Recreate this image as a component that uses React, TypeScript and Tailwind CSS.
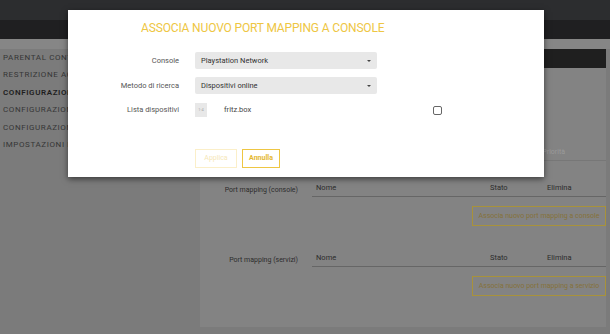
import React from "react";

function SideItem({ label, active }: { label: string; active?: boolean }) {
  return (
    <div
      className={`h-[17.5px] flex items-center pl-[3px] text-[8px] tracking-[0.6px] uppercase whitespace-nowrap ${
        active ? "text-[#1e1e1e] font-semibold" : "text-[#363636]"
      }`}
    >
      {label}
    </div>
  );
}

function Section({ label, button }: { label: string; button: string }) {
  return (
    <div className="flex flex-col">
      <div className="flex items-end h-[14px]">
        <div className="w-[98px] text-right text-[7px] text-[#2c2c2c] pb-[2px]">{label}</div>
        <div className="ml-[14px] flex-1 flex items-end border-b border-[#666] h-[14px] text-[7.5px] text-[#2c2c2c] pb-[3px]">
          <span className="pl-[4px] w-[178px]">Nome</span>
          <span className="w-[57px]">Stato</span>
          <span>Elimina</span>
        </div>
      </div>
      <div className="flex justify-end mt-[9px]">
        <div className="h-[20px] w-[134px] border border-[#a8923a] flex items-center justify-center text-[7px] text-[#85723a] whitespace-nowrap">
          {button}
        </div>
      </div>
    </div>
  );
}

export default function App() {
  return (
    <div
      className="relative w-[610px] h-[334px] overflow-hidden bg-[#7b7b7b]"
      style={{ fontFamily: 'Roboto, "Liberation Sans", sans-serif' }}
    >
      <div className="h-[20px] bg-[#2c2d2f]" />
      <div className="h-[19px] bg-[#1f1f21]" />
      <div className="h-[10px] bg-[#868686]" />
      <div className="flex">
        <div className="w-[200px] flex flex-col">
          <SideItem label="Parental control" />
          <SideItem label="Restrizione accesso" />
          <SideItem label="Configurazione NAT" active />
          <SideItem label="Configurazione DMZ" />
          <SideItem label="Configurazione UPnP" />
          <SideItem label="Impostazioni LAN" />
        </div>
        <div className="w-[406px] flex flex-col">
          <div className="h-[19px] bg-[#1f1f1f]" />
          <div className="h-[259px] bg-[#838383] flex flex-col">
            <div className="h-[93px] flex justify-end items-end">
              <div className="flex-1 ml-[112px] border-b border-[#777] h-[14px] flex items-end justify-end pb-[3px] pr-[41px] text-[7px] text-[#9a9a9a]">
                Priorità
              </div>
            </div>
            <div className="mt-[22px]">
              <Section label="Port mapping (console)" button="Associa nuovo port mapping a console" />
            </div>
            <div className="mt-[27px]">
              <Section label="Port mapping (servizi)" button="Associa nuovo port mapping a servizio" />
            </div>
          </div>
        </div>
      </div>

      <div className="absolute left-[68px] top-[10px] w-[476px] h-[167px] bg-white shadow-[0_2px_6px_rgba(0,0,0,0.55)]">
        <div className="pt-[10px] pl-[73px] text-[12px] leading-[16px] tracking-[-0.15px] text-[#eec643] whitespace-nowrap">
          ASSOCIA NUOVO PORT MAPPING A CONSOLE
        </div>
        <div className="mt-[16px] flex flex-col">
          <div className="flex items-center h-[17px]">
            <div className="w-[111px] text-right text-[7.5px] text-[#555]">Console</div>
            <div className="ml-[16px] w-[182px] h-[17px] bg-[#e8e8e8] rounded-[2px] flex items-center justify-between px-[6px] text-[7.5px] text-[#333]">
              <span>Playstation Network</span>
              <span className="w-0 h-0 border-l-[2px] border-r-[2px] border-t-[2px] border-l-transparent border-r-transparent border-t-[#444]" />
            </div>
          </div>
          <div className="flex items-center h-[17px] mt-[8px]">
            <div className="w-[111px] text-right text-[7.5px] text-[#555]">Metodo di ricerca</div>
            <div className="ml-[16px] w-[182px] h-[17px] bg-[#e8e8e8] rounded-[2px] flex items-center justify-between px-[6px] text-[7.5px] text-[#333]">
              <span>Dispositivi online</span>
              <span className="w-0 h-0 border-l-[2px] border-r-[2px] border-t-[2px] border-l-transparent border-r-transparent border-t-[#444]" />
            </div>
          </div>
          <div className="flex items-center h-[14px] mt-[9px]">
            <div className="w-[111px] text-right text-[7.5px] text-[#555]">Lista dispositivi</div>
            <div className="ml-[16px] w-[12px] h-[14px] bg-[#e8e8e8] flex items-center justify-center text-[4px] text-[#aaa]">
              1-4
            </div>
            <div className="ml-[17px] text-[7.5px] text-[#444] w-[141px] -mt-[1px]">fritz.box</div>
            <div className="ml-[68px] w-[9px] h-[9px] border border-[#666] rounded-[2px]" />
          </div>
        </div>
        <div className="mt-[32px] ml-[127px] flex gap-[5px]">
          <div className="w-[42px] h-[19px] border border-[#fbefc9] flex items-center justify-center text-[7px] text-[#f6e7b8]">
            Applica
          </div>
          <div className="w-[38px] h-[19px] border border-[#eec643] flex items-center justify-center text-[7px] font-bold text-[#e4b730]">
            Annulla
          </div>
        </div>
      </div>
    </div>
  );
}
